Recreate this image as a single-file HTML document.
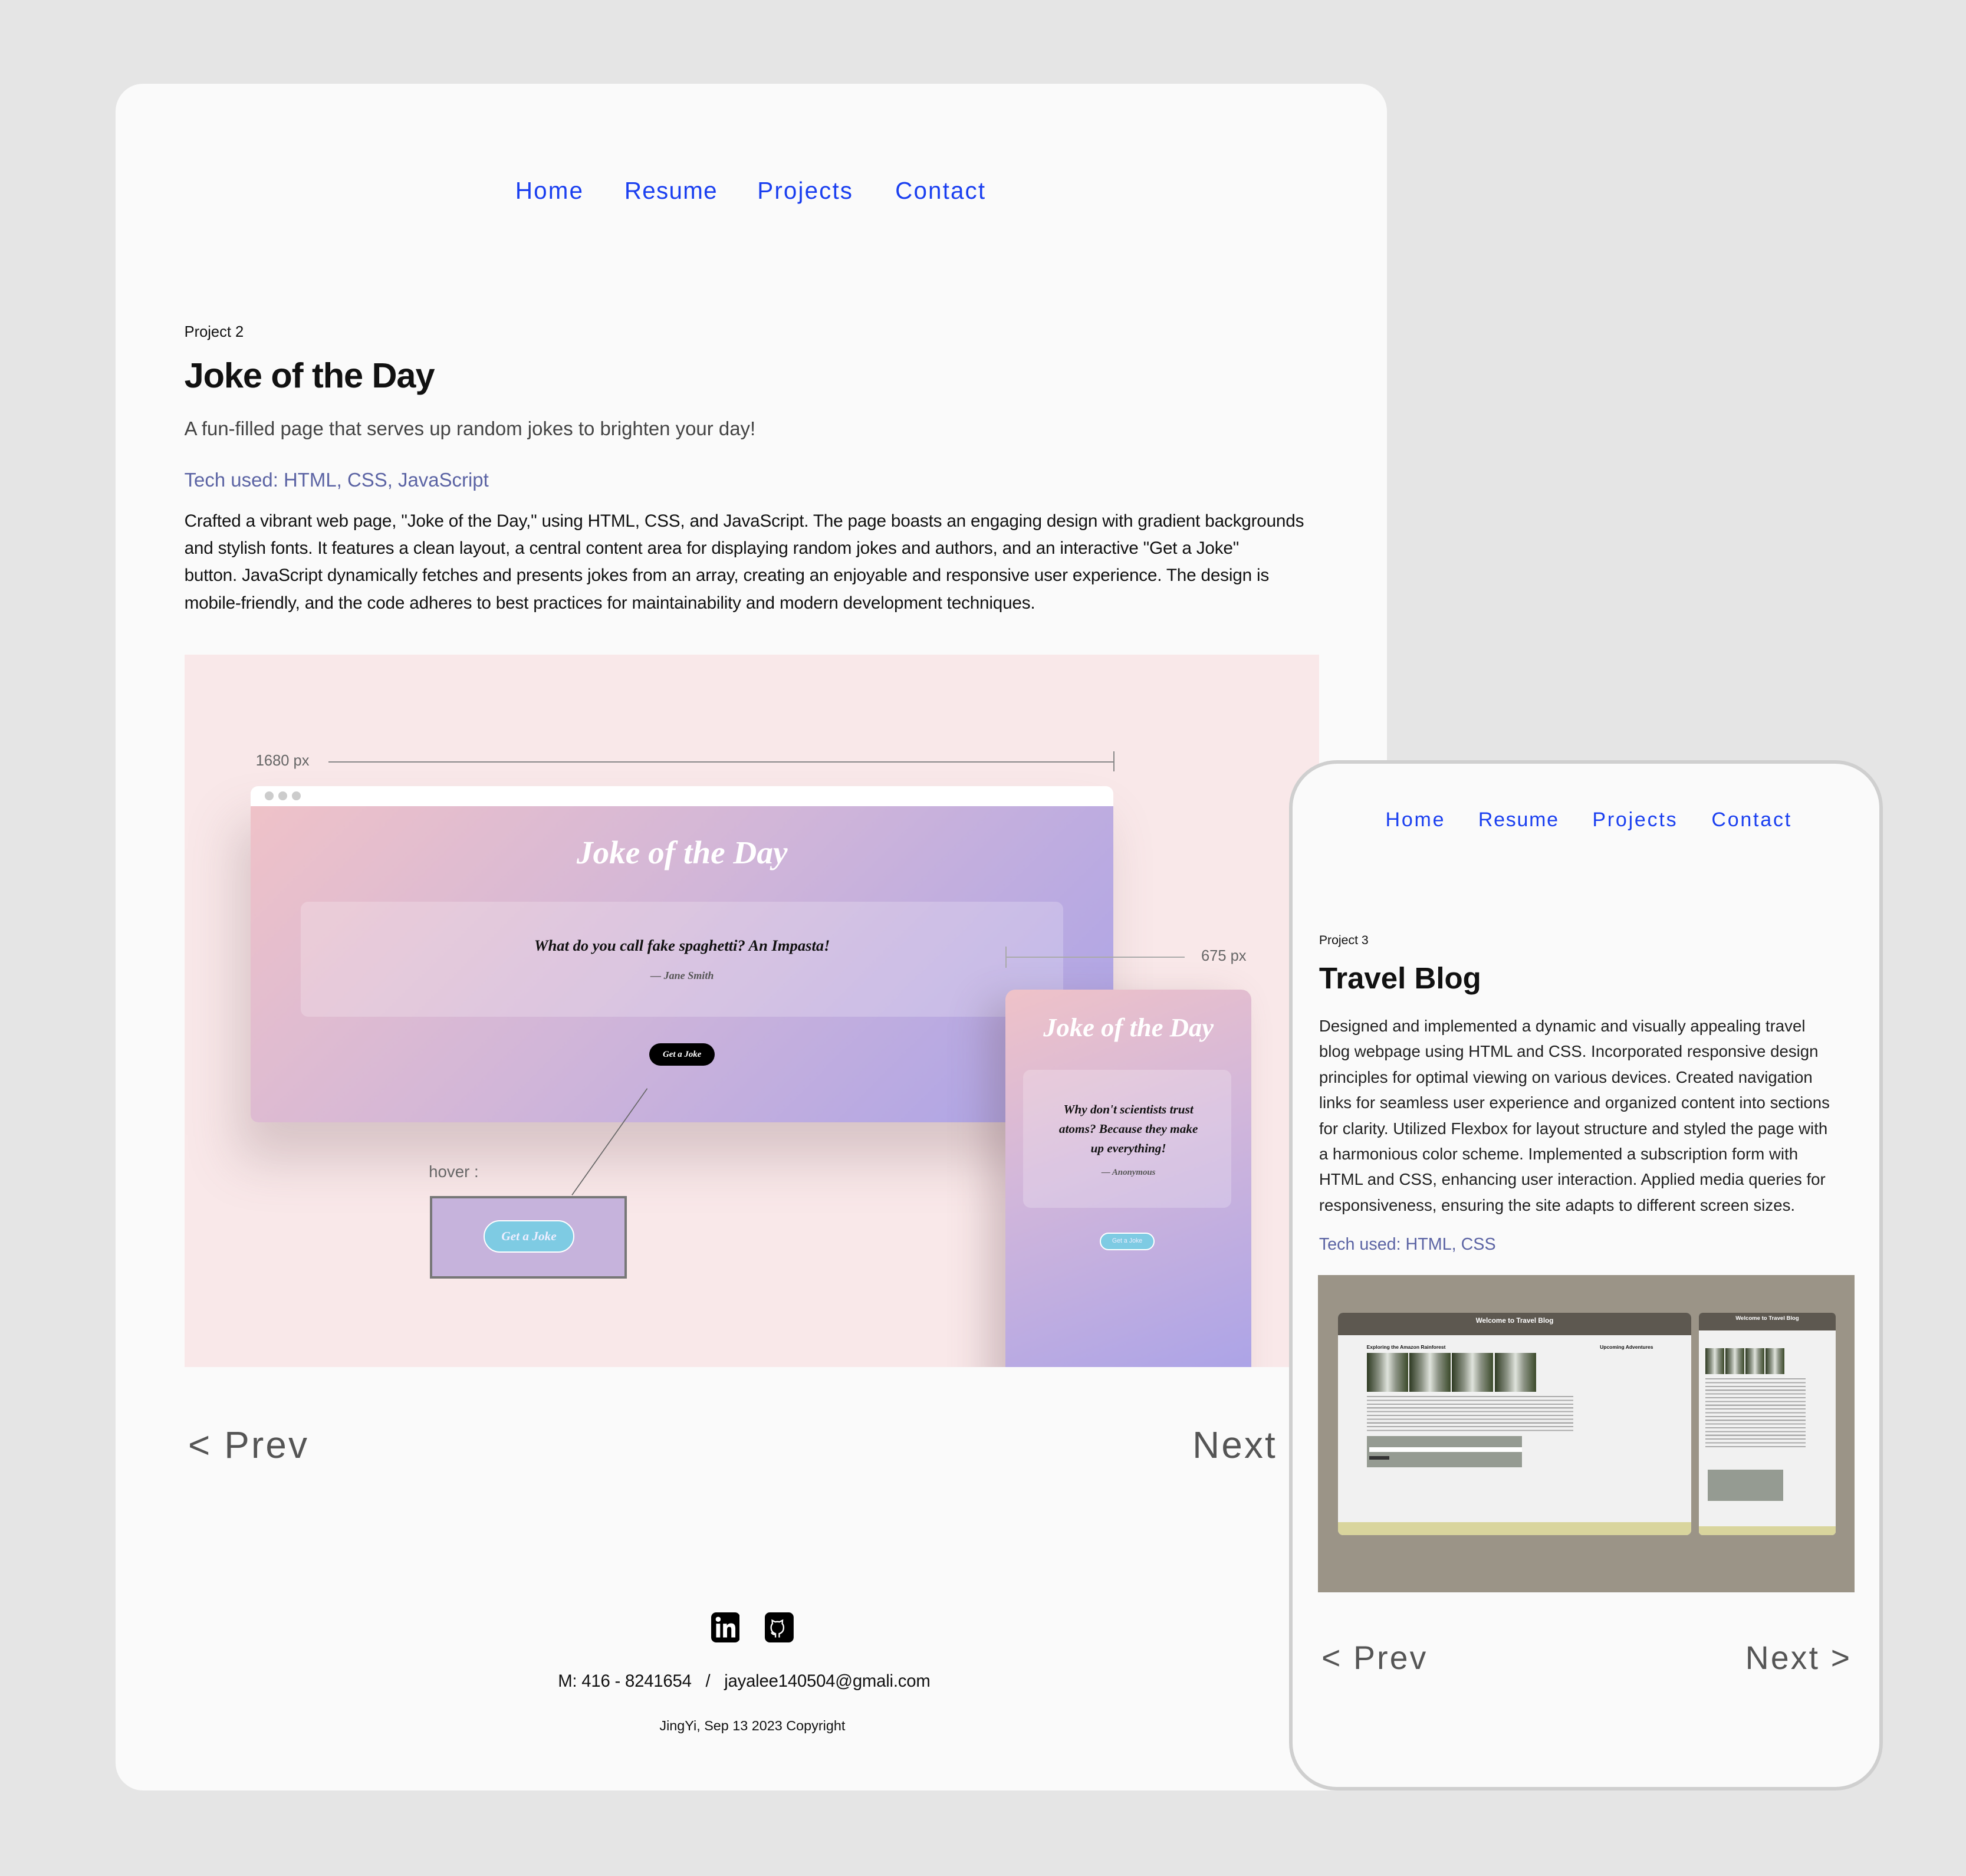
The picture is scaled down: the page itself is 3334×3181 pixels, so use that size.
<!DOCTYPE html>
<html><head><meta charset="utf-8">
<style>
html,body{margin:0;padding:0;background:#e5e5e5;}
body{width:3334px;height:3180px;overflow:hidden;}
#w{zoom:2.12628;width:1568px;height:1496px;position:relative;font-family:"Liberation Sans",sans-serif;color:#111;}
.a{position:absolute;white-space:nowrap;}
.card{position:absolute;left:92px;top:67px;width:1014px;height:1361px;background:#fafafa;border-radius:22px;}
.nav{color:#1a3ff0;font-size:19px;letter-spacing:1px;}
.cur{font-family:"Liberation Serif",serif;font-style:italic;font-weight:bold;}
.grad{background:linear-gradient(135deg,#efc2c8 0%,#d2b6d8 45%,#a9a2e8 100%);}
.wf{background:linear-gradient(90deg,#2e3a22,#8d9486 30%,#dfe3dc 50%,#8d9486 70%,#3b4a2a);}
</style></head><body><div id="w">
<div class="card"></div>
<div class="a nav" style="left:411px;top:141px">Home</div>
<div class="a nav" style="left:498px;top:141px;letter-spacing:0.6px">Resume</div>
<div class="a nav" style="left:604px;top:141px">Projects</div>
<div class="a nav" style="left:714px;top:141px">Contact</div>
<div class="a" style="left:147px;top:258px;font-size:12px">Project 2</div>
<div class="a" style="left:147px;top:283px;font-size:28px;font-weight:bold;letter-spacing:-0.5px">Joke of the Day</div>
<div class="a" style="left:147px;top:333px;font-size:15.5px;color:#444">A fun-filled page that serves up random jokes to brighten your day!</div>
<div class="a" style="left:147px;top:374px;font-size:15.5px;color:#5c64a4">Tech used: HTML, CSS, JavaScript</div>
<div class="a" style="left:147px;top:405px;font-size:14px;line-height:21.7px;color:#111;letter-spacing:-0.1px">Crafted a vibrant web page, "Joke of the Day," using HTML, CSS, and JavaScript. The page boasts an engaging design with gradient backgrounds<br>and stylish fonts. It features a clean layout, a central content area for displaying random jokes and authors, and an interactive "Get a Joke"<br>button. JavaScript dynamically fetches and presents jokes from an array, creating an enjoyable and responsive user experience. The design is<br>mobile-friendly, and the code adheres to best practices for maintainability and modern development techniques.</div>

<div class="a" style="left:147px;top:522px;width:905px;height:568px;background:#f9e8e9;overflow:hidden">
  <div class="a" style="left:57px;top:78px;font-size:12px;color:#666">1680 px</div>
  <div class="a" style="left:115px;top:85px;width:626px;height:1px;background:#888"></div>
  <div class="a" style="left:741px;top:77px;width:1px;height:16px;background:#888"></div>
  <div class="a" style="left:53px;top:105px;width:688px;height:268px;border-radius:6px;overflow:hidden;box-shadow:-10px 30px 40px rgba(120,90,100,.25)">
    <div style="height:16px;background:#fff;position:relative">
      <span class="a" style="left:11px;top:4px;width:7px;height:7px;border-radius:50%;background:#ccc"></span>
      <span class="a" style="left:22px;top:4px;width:7px;height:7px;border-radius:50%;background:#ccc"></span>
      <span class="a" style="left:33px;top:4px;width:7px;height:7px;border-radius:50%;background:#ccc"></span>
    </div>
    <div class="grad" style="height:252px;position:relative">
      <div class="a cur" style="left:0;width:688px;text-align:center;top:22px;font-size:26px;color:#fff">Joke of the Day</div>
      <div class="a" style="left:40px;top:76px;width:608px;height:92px;background:rgba(255,255,255,.22);border-radius:6px"></div>
      <div class="a cur" style="left:0;width:688px;text-align:center;top:104px;font-size:12.5px;color:#111">What do you call fake spaghetti? An Impasta!</div>
      <div class="a cur" style="left:0;width:688px;text-align:center;top:130px;font-size:8.5px;color:#555">— Jane Smith</div>
      <div class="a cur" style="left:318px;top:189px;width:52px;height:18px;border-radius:9px;background:#000;color:#fff;font-size:7px;text-align:center;line-height:18px">Get a Joke</div>
    </div>
  </div>
  <svg class="a" style="left:0;top:0" width="905" height="568"><line x1="369" y1="346" x2="309" y2="431" stroke="#666" stroke-width="0.8"/></svg>
  <div class="a" style="left:195px;top:405px;font-size:13px;color:#666">hover :</div>
  <div class="a" style="left:196px;top:432px;width:153px;height:62px;border:2px solid #777;background:#c6b3dc">
    <div class="a cur" style="left:41px;top:17px;width:72px;height:26px;border-radius:13px;background:#7ecbe3;border:1px solid #fff;box-sizing:border-box;color:#eef;font-size:10px;text-align:center;line-height:24px">Get a Joke</div>
  </div>
  <div class="a" style="left:811px;top:234px;font-size:12px;color:#666">675 px</div>
  <div class="a" style="left:656px;top:241px;width:142px;height:1px;background:#aaa"></div>
  <div class="a" style="left:655px;top:233px;width:1px;height:17px;background:#aaa"></div>
  <div class="a grad" style="left:655px;top:267px;width:196px;height:320px;border-radius:8px 8px 0 0;background:linear-gradient(160deg,#efc2c8 0%,#d3b7da 40%,#a9a2e8 100%);box-shadow:-15px 10px 30px rgba(120,90,100,.3)">
    <div class="a cur" style="left:0;width:196px;text-align:center;top:18px;font-size:21px;color:#fff">Joke of the Day</div>
    <div class="a" style="left:14px;top:64px;width:166px;height:110px;background:rgba(255,255,255,.22);border-radius:6px"></div>
    <div class="a cur" style="left:0;width:196px;text-align:center;top:88px;font-size:10px;line-height:15.5px;color:#111">Why don't scientists trust<br>atoms? Because they make<br>up everything!</div>
    <div class="a cur" style="left:0;width:196px;text-align:center;top:142px;font-size:7px;color:#555">— Anonymous</div>
    <div class="a" style="left:75px;top:194px;width:44px;height:14px;border-radius:7px;background:#7ecbe3;border:1px solid #fff;box-sizing:border-box;color:#eef;font-size:5px;text-align:center;line-height:12px">Get a Joke</div>
  </div>
</div>

<div class="a" style="left:150px;top:1135px;font-size:30px;color:#555;letter-spacing:1.5px">&lt; Prev</div>
<div class="a" style="left:951px;top:1135px;font-size:30px;color:#555;letter-spacing:1.5px">Next</div>

<svg class="a" style="left:567px;top:1286px" width="23" height="24" viewBox="0 0 23 24"><rect x="0" y="0" width="23" height="24" rx="4" fill="#000"/><rect x="4" y="9" width="3.2" height="11" fill="#fff"/><circle cx="5.6" cy="5.5" r="2" fill="#fff"/><path d="M9.5 9h3v1.6c.8-1.3 2-1.9 3.4-1.9 2.3 0 3.4 1.4 3.4 4V20h-3.2v-6.5c0-1.3-.5-2-1.6-2s-1.8.8-1.8 2.1V20H9.5z" fill="#fff"/></svg>
<svg class="a" style="left:610px;top:1286px" width="23" height="24" viewBox="0 0 23 24"><rect x="0" y="0" width="23" height="24" rx="4" fill="#000"/><path d="M8.5 20v-3c-2.5-.8-3.5-2.5-3.5-5 0-1.2.4-2.2 1.1-3l-.2-2.6 2.4 1.2c1.1-.3 2.3-.3 3.4 0l2.4-1.2-.2 2.6c.7.8 1.1 1.8 1.1 3 0 2.5-1 4.2-3.5 5V20M8.5 17.5c-1.5.4-2.5 0-3.3-1.5" stroke="#fff" stroke-width="1.1" fill="none"/></svg>
<div class="a" style="left:445px;top:1333px;font-size:13.8px;letter-spacing:-0.1px">M: 416 - 8241654 &nbsp;&nbsp;/ &nbsp;&nbsp;jayalee140504@gmali.com</div>
<div class="a" style="left:526px;top:1370px;font-size:11px">JingYi, Sep 13 2023 Copyright</div>

<div class="a" style="left:1028px;top:606px;width:468px;height:816px;border:3px solid #cfcfcf;border-radius:38px;background:#fafafa"></div>
<div class="a" style="left:1105px;top:645px;font-size:16px;color:#1a3ff0;letter-spacing:1.3px">Home</div>
<div class="a" style="left:1179px;top:645px;font-size:16px;color:#1a3ff0;letter-spacing:0.8px">Resume</div>
<div class="a" style="left:1270px;top:645px;font-size:16px;color:#1a3ff0;letter-spacing:1.3px">Projects</div>
<div class="a" style="left:1365px;top:645px;font-size:16px;color:#1a3ff0;letter-spacing:1.3px">Contact</div>
<div class="a" style="left:1052px;top:744px;font-size:10px">Project 3</div>
<div class="a" style="left:1052px;top:766px;font-size:24px;font-weight:bold">Travel Blog</div>
<div class="a" style="left:1052px;top:808px;font-size:13px;line-height:20.4px;color:#222">Designed and implemented a dynamic and visually appealing travel<br>blog webpage using HTML and CSS. Incorporated responsive design<br>principles for optimal viewing on various devices. Created navigation<br>links for seamless user experience and organized content into sections<br>for clarity. Utilized Flexbox for layout structure and styled the page with<br>a harmonious color scheme. Implemented a subscription form with<br>HTML and CSS, enhancing user interaction. Applied media queries for<br>responsiveness, ensuring the site adapts to different screen sizes.</div>
<div class="a" style="left:1052px;top:985px;font-size:13.5px;color:#5c64a4">Tech used: HTML, CSS</div>

<div class="a" style="left:1051px;top:1017px;width:428px;height:253px;background:#9b9487">
  <div class="a" style="left:16px;top:30px;width:282px;height:177px;background:#f1f1f1;border-radius:4px;overflow:hidden">
    <div style="height:18px;background:#5d5850;color:#fff;font-size:5.5px;text-align:center;font-weight:bold;padding-top:3px;box-sizing:border-box">Welcome to Travel Blog</div>
    <div class="a" style="left:23px;top:25px;font-size:4px;font-weight:bold">Exploring the Amazon Rainforest</div>
    <div class="a wf" style="left:23px;top:32px;width:33px;height:31px"></div>
    <div class="a wf" style="left:57px;top:32px;width:33px;height:31px"></div>
    <div class="a wf" style="left:91px;top:32px;width:33px;height:31px"></div>
    <div class="a wf" style="left:125px;top:32px;width:33px;height:31px"></div>
    <div class="a" style="left:23px;top:66px;width:165px;height:30px;background:repeating-linear-gradient(#aaa 0 1px,transparent 1px 3px)"></div>
    <div class="a" style="left:209px;top:25px;font-size:4px;font-weight:bold">Upcoming Adventures</div>
    <div class="a" style="left:23px;top:98px;width:124px;height:25px;background:#959b92"></div>
    <div class="a" style="left:25px;top:107px;width:122px;height:4px;background:#fff"></div>
    <div class="a" style="left:25px;top:114px;width:16px;height:3px;background:#333"></div>
    <div class="a" style="left:0;top:167px;width:282px;height:10px;background:#d9d59d"></div>
  </div>
  <div class="a" style="left:304px;top:30px;width:109px;height:177px;background:#f1f1f1;border-radius:3px;overflow:hidden">
    <div style="height:14px;background:#5d5850;color:#fff;font-size:4.5px;text-align:center;font-weight:bold;padding-top:2px;box-sizing:border-box">Welcome to Travel Blog</div>
    <div class="a wf" style="left:5px;top:28px;width:15px;height:21px"></div>
    <div class="a wf" style="left:21px;top:28px;width:15px;height:21px"></div>
    <div class="a wf" style="left:37px;top:28px;width:15px;height:21px"></div>
    <div class="a wf" style="left:53px;top:28px;width:15px;height:21px"></div>
    <div class="a" style="left:5px;top:52px;width:80px;height:55px;background:repeating-linear-gradient(#aaa 0 1px,transparent 1px 3px)"></div>
    <div class="a" style="left:7px;top:125px;width:60px;height:25px;background:#959b92"></div>
    <div class="a" style="left:0;top:170px;width:109px;height:7px;background:#d9d59d"></div>
  </div>
</div>
<div class="a" style="left:1054px;top:1307px;font-size:26px;color:#555;letter-spacing:1.5px">&lt; Prev</div>
<div class="a" style="left:1392px;top:1307px;font-size:26px;color:#555;letter-spacing:1.5px">Next &gt;</div>
</div></body></html>
